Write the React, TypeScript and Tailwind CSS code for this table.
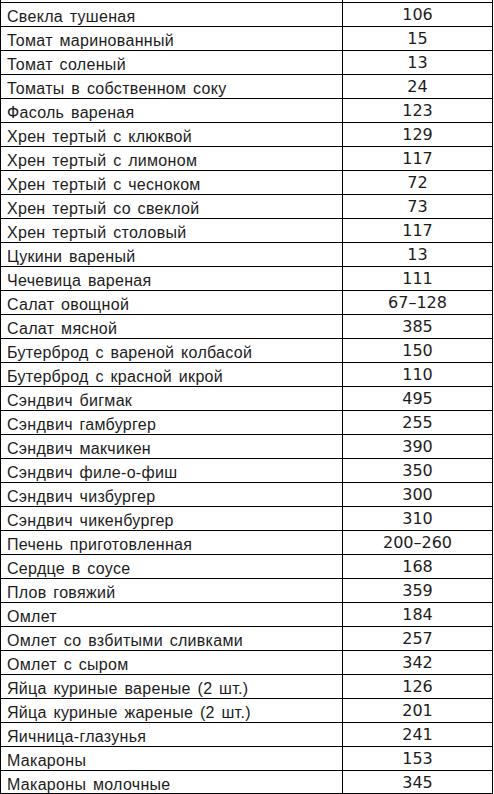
import React from "react";

const rows: [string, string][] = [
  ["Свекла тушеная", "106"],
  ["Томат маринованный", "15"],
  ["Томат соленый", "13"],
  ["Томаты в собственном соку", "24"],
  ["Фасоль вареная", "123"],
  ["Хрен тертый с клюквой", "129"],
  ["Хрен тертый с лимоном", "117"],
  ["Хрен тертый с чесноком", "72"],
  ["Хрен тертый со свеклой", "73"],
  ["Хрен тертый столовый", "117"],
  ["Цукини вареный", "13"],
  ["Чечевица вареная", "111"],
  ["Салат овощной", "67–128"],
  ["Салат мясной", "385"],
  ["Бутерброд с вареной колбасой", "150"],
  ["Бутерброд с красной икрой", "110"],
  ["Сэндвич бигмак", "495"],
  ["Сэндвич гамбургер", "255"],
  ["Сэндвич макчикен", "390"],
  ["Сэндвич филе-о-фиш", "350"],
  ["Сэндвич чизбургер", "300"],
  ["Сэндвич чикенбургер", "310"],
  ["Печень приготовленная", "200–260"],
  ["Сердце в соусе", "168"],
  ["Плов говяжий", "359"],
  ["Омлет", "184"],
  ["Омлет со взбитыми сливками", "257"],
  ["Омлет с сыром", "342"],
  ["Яйца куриные вареные (2 шт.)", "126"],
  ["Яйца куриные жареные (2 шт.)", "201"],
  ["Яичница-глазунья", "241"],
  ["Макароны", "153"],
  ["Макароны молочные", "345"],
];

export default function App() {
  return (
    <div className="w-[494px] h-[794px] overflow-hidden bg-white text-[#1c1c1c]">
      <div className="w-[493px] flex h-[2px]">
        <div className="w-[342px] border-l border-black" />
        <div className="w-[151px] border-l border-r border-black" />
      </div>
      {rows.map(([name, val], i) => (
        <div
          key={i}
          className={
            i === rows.length - 1
              ? "w-[493px] flex h-[24px] border-t border-b border-black"
              : "w-[493px] flex h-[24px] border-t border-black"
          }
        >
          <div
            className="w-[342px] border-l border-black pl-[6px] pt-[4px] text-[16px] leading-[19px] tracking-[0.3px] [word-spacing:2px] whitespace-nowrap"
            style={{ fontFamily: '"Liberation Sans", Arial, sans-serif' }}
          >
            {name}
          </div>
          <div
            className="w-[151px] border-l border-r border-black pt-[1px] text-center text-[16px] leading-[22px] whitespace-nowrap"
            style={{ fontFamily: '"DejaVu Sans", sans-serif' }}
          >
            {val}
          </div>
        </div>
      ))}
    </div>
  );
}
